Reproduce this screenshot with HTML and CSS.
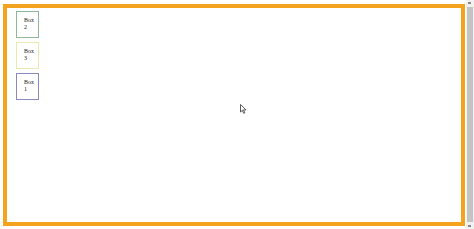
FILE: index.html
```html
<!DOCTYPE html>
<html>
<head>
<meta charset="utf-8">
<link rel="stylesheet" href="styles.css">
</head>
<body>
<div class="page">
  <div class="view">
    <div class="frame">
      <div class="box box-green">Box<br>2</div>
      <div class="box box-yellow">Box<br>3</div>
      <div class="box box-purple">Box<br>1</div>
    </div>
    <svg class="cursor" width="7" height="10" viewBox="0 0 7 10"><path d="M0.5 0.5 L0.5 8 L2.3 6.3 L3.6 9.3 L4.8 8.8 L3.5 5.9 L6 5.9 Z" fill="#fff" stroke="#333" stroke-width="0.8"/></svg>
  </div>
  <div class="scrollbar">
    <div class="arrow up"></div>
    <div class="thumb"></div>
    <div class="arrow down"></div>
  </div>
</div>
</body>
</html>
```
FILE: styles.css
```css
html, body {
  margin: 0;
  padding: 0;
  background: #fff;
}
.page {
  display: flex;
  width: 474px;
  height: 229px;
  overflow: hidden;
}
.view {
  position: relative;
  flex: 1;
  padding: 4px 0 3px 3px;
}
.frame {
  box-sizing: border-box;
  width: 462px;
  height: 222px;
  border: 4px solid #f3a31e;
  padding: 3px 0 0 9px;
  display: flex;
  flex-direction: column;
  gap: 4px;
}
.box {
  box-sizing: border-box;
  width: 23px;
  height: 27px;
  border: 1px solid #9cb;
  padding: 5px 0 0 7px;
  font-family: "Liberation Serif", serif;
  font-size: 6px;
  line-height: 6.5px;
  color: #222;
}
.box-green { border-color: #8fb59a; }
.box-yellow { border-color: #eaeab0; }
.box-purple { border-color: #8a88c0; }
.cursor {
  position: absolute;
  left: 240px;
  top: 104px;
}
.scrollbar {
  width: 8px;
  display: flex;
  flex-direction: column;
  background: #f1f1f1;
}
.arrow {
  height: 6px;
  position: relative;
}
.arrow::after {
  content: "";
  position: absolute;
  left: 2px;
  top: 2px;
  width: 3px;
  height: 2px;
  background: #888;
}
.thumb {
  flex: 1;
  margin: 1px 1px;
  background: #c4c4c4;
}
```
